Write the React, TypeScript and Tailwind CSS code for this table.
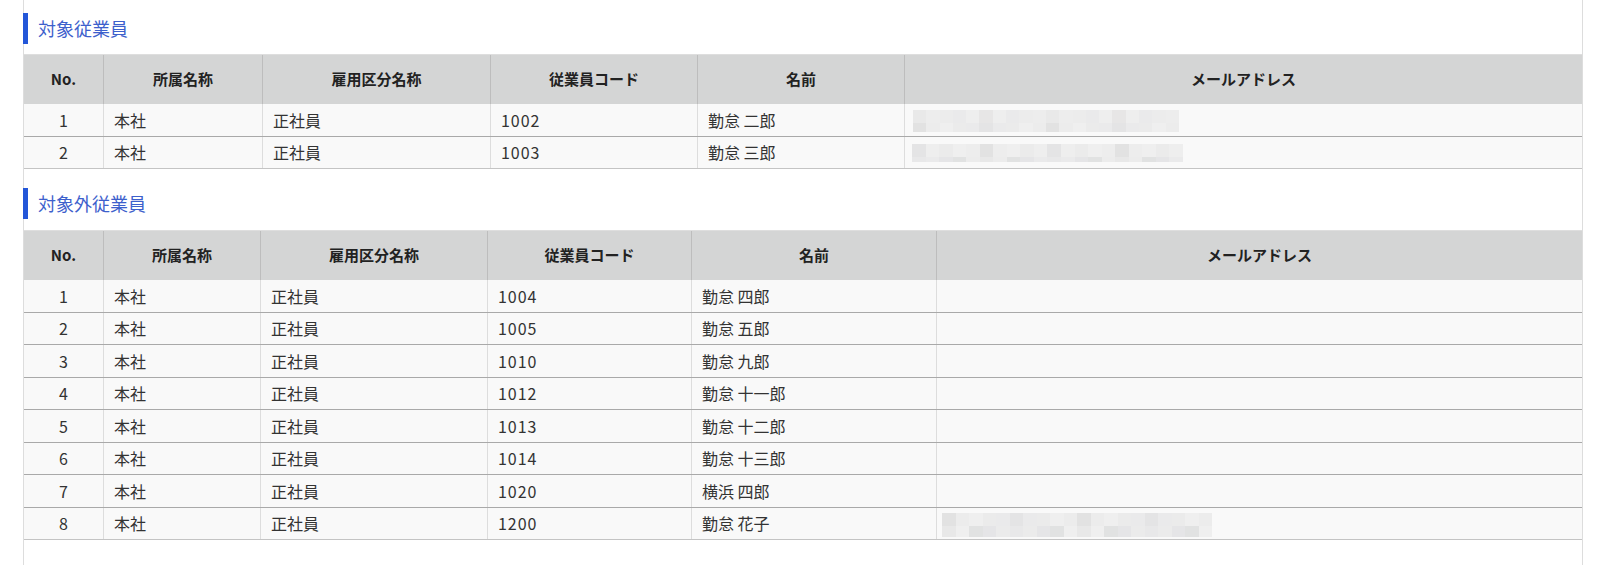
import React from "react";

type Row = { no: number; dept: string; kind: string; code: string; name: string; mosaic?: { ml: string; mt: string; w: string; h1: string; h2: string; seed: number } };

const PALETTE = [
  "bg-[#e8e8e8]",
  "bg-[#ebebeb]",
  "bg-[#e4e4e5]",
  "bg-[#ececec]",
  "bg-[#e9e9e9]",
  "bg-[#eeeeee]",
  "bg-[#e5e5e7]",
  "bg-[#e8e8e9]",
  "bg-[#efefef]",
  "bg-[#e2e2e2]",
  "bg-[#eaeaeb]",
  "bg-[#e7e6e6]",
  "bg-[#ededed]",
  "bg-[#e1e2e2]",
];

function Mosaic({ m }: { m: NonNullable<Row["mosaic"]> }) {
  const cols = 20;
  const rowsH = [m.h1, m.h2];
  return (
    <div className={`flex flex-col ${m.ml} ${m.mt} ${m.w}`}>
      {rowsH.map((h, r) => (
        <div key={r} className={`flex ${h}`}>
          {Array.from({ length: cols }).map((_, c) => {
            const idx = (c * 7 + r * 5 + m.seed * 3 + ((c * c + m.seed) % 5)) % PALETTE.length;
            return <div key={c} className={`flex-1 ${PALETTE[idx]}`} />;
          })}
        </div>
      ))}
    </div>
  );
}

const table1: Row[] = [
  { no: 1, dept: "本社", kind: "正社員", code: "1002", name: "勤怠 二郎", mosaic: { ml: "ml-[8px]", mt: "mt-[6px]", w: "w-[266px]", h1: "h-[13px]", h2: "h-[9px]", seed: 1 } },
  { no: 2, dept: "本社", kind: "正社員", code: "1003", name: "勤怠 三郎", mosaic: { ml: "ml-[7px]", mt: "mt-[7px]", w: "w-[271px]", h1: "h-[13px]", h2: "h-[5px]", seed: 4 } },
];

const table2: Row[] = [
  { no: 1, dept: "本社", kind: "正社員", code: "1004", name: "勤怠 四郎" },
  { no: 2, dept: "本社", kind: "正社員", code: "1005", name: "勤怠 五郎" },
  { no: 3, dept: "本社", kind: "正社員", code: "1010", name: "勤怠 九郎" },
  { no: 4, dept: "本社", kind: "正社員", code: "1012", name: "勤怠 十一郎" },
  { no: 5, dept: "本社", kind: "正社員", code: "1013", name: "勤怠 十二郎" },
  { no: 6, dept: "本社", kind: "正社員", code: "1014", name: "勤怠 十三郎" },
  { no: 7, dept: "本社", kind: "正社員", code: "1020", name: "横浜 四郎" },
  { no: 8, dept: "本社", kind: "正社員", code: "1200", name: "勤怠 花子", mosaic: { ml: "ml-[5px]", mt: "mt-[5px]", w: "w-[270px]", h1: "h-[13px]", h2: "h-[11px]", seed: 7 } },
];

const headers = ["No.", "所属名称", "雇用区分名称", "従業員コード", "名前", "メールアドレス"];

function Title({ text, className }: { text: string; className: string }) {
  return (
    <h2 className={`-ml-px h-[31px] border-l-[5px] border-[#2356d8] pl-[10px] text-[18px] leading-[31px] font-normal text-[#3d60cc] ${className}`}>
      {text}
    </h2>
  );
}

function Table({ rows, grid, className }: { rows: Row[]; grid: string; className: string }) {
  return (
    <div className={className}>
      <div className={`grid ${grid} h-[50px] bg-[#d4d5d5] border-t border-[#dedede]`}>
        {headers.map((h, i) => (
          <div
            key={h}
            className={`flex items-center justify-center text-[15px] font-bold text-[#222222] ${i < headers.length - 1 ? "border-r border-[#bdbdbd]" : ""}`}
          >
            {h}
          </div>
        ))}
      </div>
      {rows.map((r, ri) => (
        <div
          key={r.no}
          className={`grid ${grid} h-[32.5px] bg-[#f9f9f9] border-b ${ri === rows.length - 1 ? "border-[#c4c4c4]" : "border-[#a9a9a9]"} text-[16px] text-[#333333]`}
        >
          <div className="flex items-center justify-center border-r border-[#dddddd]">{r.no}</div>
          <div className="flex items-center pl-[10px] border-r border-[#dddddd]">{r.dept}</div>
          <div className="flex items-center pl-[10px] border-r border-[#dddddd]">{r.kind}</div>
          <div className="flex items-center pl-[10px] border-r border-[#dddddd] tracking-[0.06em]">{r.code}</div>
          <div className="flex items-center pl-[10px] border-r border-[#dddddd]">{r.name}</div>
          <div className="flex items-start">{r.mosaic ? <Mosaic m={r.mosaic} /> : null}</div>
        </div>
      ))}
    </div>
  );
}

export default function App() {
  return (
    <div className="min-h-[565px] bg-white font-['Noto_Sans_CJK_JP','Noto_Sans',sans-serif]">
      <div className="ml-[23px] w-[1560px] min-h-[565px] border-x border-[#dddddd] pt-[13px]">
        <Title text="対象従業員" className="" />
        <Table rows={table1} grid="grid-cols-[80px_159px_228px_207px_207px_1fr]" className="mt-[10px]" />
        <Title text="対象外従業員" className="mt-[19px]" />
        <Table rows={table2} grid="grid-cols-[80px_157px_227px_204px_245px_1fr]" className="mt-[11px]" />
      </div>
    </div>
  );
}
